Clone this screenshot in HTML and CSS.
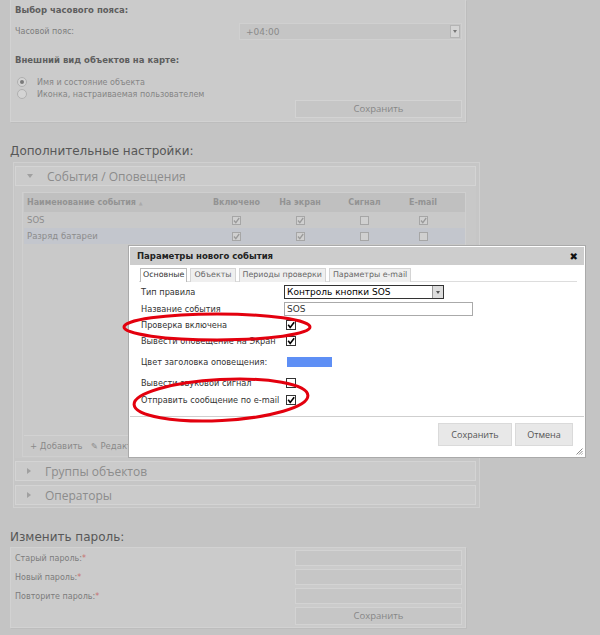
FILE: index.html
```html
<!DOCTYPE html>
<html lang="ru">
<head>
<meta charset="UTF-8">
<meta name="viewport" content="width=device-width, initial-scale=1.0">
<title>Настройки</title>
<link rel="stylesheet" href="styles.css">
</head>
<body>
<div class="page">

    <div class="panel tz-panel">
        <div class="panel-title">Выбор часового пояса:</div>
        <div class="form-row first">
            <span class="label">Часовой пояс:</span>
            <div class="select-box"><span>+04:00</span><span class="select-arrow"></span></div>
        </div>
        <div class="panel-title spaced">Внешний вид объектов на карте:</div>
        <div class="radio-row first"><span class="radio checked"></span>Имя и состояние объекта</div>
        <div class="radio-row"><span class="radio"></span>Иконка, настраиваемая пользователем</div>
        <div class="btn-row"><div class="button">Сохранить</div></div>
    </div>

    <h2 class="section-title">Дополнительные настройки:</h2>

    <div class="accordion">
        <div class="acc-header"><span class="tri open"></span>События / Оповещения</div>
        <div class="acc-content">
            <div class="grid-box">
                <div class="grid-head">
                    <div class="cell name">Наименование события <span class="sort">▲</span></div>
                    <div class="cell">Включено</div>
                    <div class="cell">На экран</div>
                    <div class="cell">Сигнал</div>
                    <div class="cell">E-mail</div>
                    <div class="cell"></div>
                </div>
                <div class="grid-body">
                    <div class="grid-row">
                        <div class="cell name">SOS</div>
                        <div class="cell"><svg class="cb-off" viewBox="0 0 9 9"><rect x="0.5" y="0.5" width="8" height="8"/><path d="M2 4.5 L3.8 6.6 L7.2 2"/></svg></div>
                        <div class="cell"><svg class="cb-off" viewBox="0 0 9 9"><rect x="0.5" y="0.5" width="8" height="8"/><path d="M2 4.5 L3.8 6.6 L7.2 2"/></svg></div>
                        <div class="cell"><svg class="cb-off" viewBox="0 0 9 9"><rect x="0.5" y="0.5" width="8" height="8"/></svg></div>
                        <div class="cell"><svg class="cb-off" viewBox="0 0 9 9"><rect x="0.5" y="0.5" width="8" height="8"/><path d="M2 4.5 L3.8 6.6 L7.2 2"/></svg></div>
                    </div>
                    <div class="grid-row selected">
                        <div class="cell name">Разряд батареи</div>
                        <div class="cell"><svg class="cb-off" viewBox="0 0 9 9"><rect x="0.5" y="0.5" width="8" height="8"/><path d="M2 4.5 L3.8 6.6 L7.2 2"/></svg></div>
                        <div class="cell"><svg class="cb-off" viewBox="0 0 9 9"><rect x="0.5" y="0.5" width="8" height="8"/><path d="M2 4.5 L3.8 6.6 L7.2 2"/></svg></div>
                        <div class="cell"><svg class="cb-off" viewBox="0 0 9 9"><rect x="0.5" y="0.5" width="8" height="8"/></svg></div>
                        <div class="cell"><svg class="cb-off" viewBox="0 0 9 9"><rect x="0.5" y="0.5" width="8" height="8"/></svg></div>
                    </div>
                </div>
                <div class="grid-foot">
                    <span class="tool">+ Добавить</span>
                    <span class="tool">&#x270E; Редактировать</span>
                </div>
            </div>
        </div>
        <div class="acc-header closed"><span class="tri"></span>Группы объектов</div>
        <div class="acc-header closed last"><span class="tri"></span>Операторы</div>
    </div>

    <h2 class="section-title pwd-title">Изменить пароль:</h2>

    <div class="panel pwd-panel">
        <div class="form-row">
            <span class="label">Старый пароль:<span class="req">*</span></span>
            <div class="field"></div>
        </div>
        <div class="form-row">
            <span class="label">Новый пароль:<span class="req">*</span></span>
            <div class="field"></div>
        </div>
        <div class="form-row">
            <span class="label">Повторите пароль:<span class="req">*</span></span>
            <div class="field"></div>
        </div>
        <div class="btn-row"><div class="button">Сохранить</div></div>
    </div>

    <!-- modal dialog over the page -->
    <div class="dialog">
        <div class="dialog-title">
            <span>Параметры нового события</span>
            <span class="dialog-close">&#x2716;</span>
        </div>
        <div class="tabs">
            <span class="tab active">Основные</span>
            <span class="tab">Объекты</span>
            <span class="tab">Периоды проверки</span>
            <span class="tab">Параметры e-mail</span>
        </div>
        <div class="dialog-form">
            <div class="lbl">Тип правила</div>
            <div class="ctl"><div class="d-select"><span>Контроль кнопки SOS</span><span class="d-arrow"></span></div></div>

            <div class="lbl">Название события</div>
            <div class="ctl"><div class="d-input">SOS</div></div>

            <div class="lbl">Проверка включена</div>
            <div class="ctl"><svg class="cb" viewBox="0 0 10 10"><rect x="0.5" y="0.5" width="9" height="9"/><path d="M2.2 4.8 L4.2 7.4 L8.2 2.2"/></svg></div>

            <div class="lbl">Вывести оповещение на Экран</div>
            <div class="ctl"><svg class="cb" viewBox="0 0 10 10"><rect x="0.5" y="0.5" width="9" height="9"/><path d="M2.2 4.8 L4.2 7.4 L8.2 2.2"/></svg></div>

            <div class="lbl">Цвет заголовка оповещения:</div>
            <div class="ctl"><span class="swatch"></span></div>

            <div class="lbl">Вывести звуковой сигнал</div>
            <div class="ctl"><svg class="cb" viewBox="0 0 10 10"><rect x="0.5" y="0.5" width="9" height="9"/></svg></div>

            <div class="lbl">Отправить сообщение по e-mail</div>
            <div class="ctl"><svg class="cb" viewBox="0 0 10 10"><rect x="0.5" y="0.5" width="9" height="9"/><path d="M2.2 4.8 L4.2 7.4 L8.2 2.2"/></svg></div>
        </div>
        <div class="dialog-buttons">
            <div class="d-button save">Сохранить</div>
            <div class="d-button cancel">Отмена</div>
        </div>
        <svg class="grip" viewBox="0 0 8 8"><path d="M7.5 1.5 L1.5 7.5 M7.5 4 L4 7.5 M7.5 6.5 L6.5 7.5"/></svg>
    </div>

    <!-- red annotation marks -->
    <svg class="marks" viewBox="0 0 600 635">
        <ellipse cx="217" cy="327" rx="93" ry="13"/>
        <ellipse cx="221" cy="400" rx="87" ry="20.5" transform="rotate(-3 221 400)"/>
    </svg>
</div>
</body>
</html>
```

FILE: styles.css
```css
/* page */
body {
    margin: 0;
    padding: 0;
    background-color: #c4c4c4;
    font-family: "DejaVu Sans", Verdana, sans-serif;
    font-size: 8px;
    color: #7c7c7c;
}

.page {
    position: relative;
    width: 600px;
    height: 635px;
    overflow: hidden;
}

/* plain panels */
.panel {
    margin-left: 10px;
    width: 456px;
    box-sizing: border-box;
    background-color: #cbcbcb;
    border: 1px solid #d2d2d2;
    box-shadow: 1px 1px 0 #bdbdbd;
}

.tz-panel {
    border-top: none;
    padding: 3px 3px 3px 4px;
}

.panel-title {
    font-weight: bold;
    font-size: 8.5px;
    line-height: 14px;
    color: #5e5e5e;
}

.panel-title.spaced {
    margin-top: 13px;
}

.form-row {
    display: flex;
    justify-content: space-between;
    align-items: center;
    height: 16px;
    margin-bottom: 3px;
}

.form-row.first {
    margin-top: 6px;
    margin-bottom: 0;
    height: 17px;
}

.select-box {
    width: 223px;
    height: 17px;
    box-sizing: border-box;
    background-color: #c5c5c5;
    border: 1px solid #d0d0d0;
    display: flex;
    justify-content: space-between;
    align-items: center;
    padding-left: 6px;
    font-size: 9px;
    color: #8a8a8a;
}

.select-arrow {
    width: 10px;
    height: 13px;
    margin-right: 1px;
    box-sizing: border-box;
    border: 1px solid #b4b4b4;
    background-color: #d4d4d4;
    position: relative;
}

.select-arrow::after {
    content: "";
    position: absolute;
    left: 2px;
    top: 4px;
    border-left: 2px solid transparent;
    border-right: 2px solid transparent;
    border-top: 3px solid #777;
}

.radio-row {
    display: flex;
    align-items: center;
    height: 12px;
    padding-left: 2px;
    color: #858585;
}

.radio-row.first {
    margin-top: 9px;
}

.radio {
    width: 8px;
    height: 8px;
    border-radius: 50%;
    border: 1px solid #b0b0b0;
    background-color: #d4d4d4;
    margin-right: 10px;
    position: relative;
}

.radio.checked::after {
    content: "";
    position: absolute;
    left: 2px;
    top: 2px;
    width: 4px;
    height: 4px;
    border-radius: 50%;
    background-color: #7a7a7a;
}

.btn-row {
    display: flex;
    justify-content: flex-end;
}

.button {
    width: 167px;
    height: 18px;
    box-sizing: border-box;
    background-color: #c6c6c6;
    border: 1px solid #d3d3d3;
    text-align: center;
    line-height: 16px;
    font-family: "Open Sans", sans-serif;
    font-size: 9.5px;
    color: #878787;
}

.section-title {
    margin: 21px 0 3px 10px;
    font-size: 12px;
    line-height: 16px;
    font-weight: normal;
    color: #575757;
}

/* accordion */
.accordion {
    margin-left: 13px;
    width: 467px;
    box-sizing: border-box;
    background-color: #c6c6c6;
    border: 1px solid #d0d0d0;
    padding: 3px 3px 2px 1px;
}

.acc-header {
    height: 20px;
    box-sizing: border-box;
    background-color: #cbcbcb;
    border: 1px solid #d4d4d4;
    display: flex;
    align-items: center;
    font-family: "Open Sans", sans-serif;
    font-size: 12px;
    color: #8c8c8c;
}

.acc-header.closed {
    margin-top: 3px;
}

.acc-header.last {
    margin-top: 4px;
}

.tri {
    width: 0;
    height: 0;
    margin-left: 11px;
    margin-right: 14px;
    border-top: 3px solid transparent;
    border-bottom: 3px solid transparent;
    border-left: 4px solid #a0a0a0;
}

.tri.open {
    border-left: 3px solid transparent;
    border-right: 3px solid transparent;
    border-top: 4px solid #a0a0a0;
    border-bottom: none;
    margin-right: 14px;
}

.acc-content {
    padding: 6px 10px 1px 7px;
    background-color: #c8c8c8;
}

.grid-box {
    border: 1px solid #cfcfcf;
    padding-left: 1px;
    background-color: #c9c9c9;
}

.grid-head {
    display: grid;
    grid-template-columns: 181px 63px 64px 65px 52px 15px;
    height: 19px;
    align-items: center;
    background-color: #c0c0c0;
    font-weight: bold;
    font-size: 8px;
    color: #939393;
}

.cell {
    text-align: center;
}

.cell.name {
    text-align: left;
    padding-left: 3px;
}

.sort {
    font-size: 5px;
    color: #aaa;
    vertical-align: middle;
}

.grid-body {
    height: 223px;
}

.grid-row {
    display: grid;
    grid-template-columns: 181px 63px 64px 65px 52px;
    height: 16px;
    align-items: center;
    font-size: 8.5px;
    color: #8c8c8c;
}

.grid-row.selected {
    background-color: #c3c6cd;
}

.cb-off {
    width: 9px;
    height: 9px;
    display: block;
    margin: 0 auto;
}

.cb-off rect {
    fill: #d0d0d0;
    stroke: #a6a6a6;
}

.cb-off path {
    fill: none;
    stroke: #9a9a9a;
    stroke-width: 1.3;
}

.grid-foot {
    height: 21px;
    border-top: 1px solid #d2d2d2;
    box-sizing: border-box;
    display: flex;
    align-items: center;
    padding-left: 6px;
    gap: 8px;
    font-size: 8.5px;
    color: #8a8a8a;
}

.pwd-title {
    margin-top: 21px;
    margin-bottom: 2px;
}

.pwd-panel {
    padding: 2px 3px 2px 4px;
}

.field {
    width: 167px;
    height: 16px;
    box-sizing: border-box;
    background-color: #c6c6c6;
    border: 1px solid #d3d3d3;
}

.req {
    color: #c77070;
}

/* dialog */
.dialog {
    position: absolute;
    left: 128px;
    top: 245px;
    width: 458px;
    height: 213px;
    box-sizing: border-box;
    background-color: #fff;
    border: 1px solid #aaa;
    padding: 1px;
    color: #333;
}

.dialog-title {
    height: 18px;
    background-color: #cdcdcd;
    display: flex;
    justify-content: space-between;
    align-items: center;
    padding: 0 6px 0 7px;
    font-weight: bold;
    font-size: 8.5px;
    color: #222;
}

.dialog-close {
    font-size: 10px;
    color: #111;
}

.tabs {
    display: flex;
    gap: 3px;
    margin: 3px 7px 0 9px;
    padding-left: 1px;
    height: 14px;
    box-sizing: border-box;
    border-bottom: 1px solid #ddd;
}

.tab {
    height: 14px;
    box-sizing: border-box;
    padding: 0 3px;
    line-height: 12px;
    border: 1px solid #d4d4d4;
    border-bottom: none;
    background-color: #efefef;
    font-size: 7.9px;
    color: #666;
}

.tab.active {
    padding: 0 2px;
    background-color: #fff;
    border-color: #bbb;
    color: #333;
}

.dialog-form {
    display: grid;
    grid-template-columns: 143px 1fr;
    grid-template-rows: 16px 17px 16px 16px 26px 16px 18px;
    align-items: center;
    margin-top: 2px;
    padding-left: 11px;
    font-size: 8.2px;
}

.lbl {
    white-space: nowrap;
}

.ctl {
    display: flex;
    align-items: center;
}

.d-select {
    width: 160px;
    height: 14px;
    box-sizing: border-box;
    border: 1px solid #333;
    display: flex;
    justify-content: space-between;
    align-items: center;
    padding-left: 2px;
    font-size: 9px;
    color: #000;
}

.d-arrow {
    width: 11px;
    height: 12px;
    box-sizing: border-box;
    border-left: 1px solid #999;
    background-color: #ddd;
    position: relative;
}

.d-arrow::after {
    content: "";
    position: absolute;
    left: 3px;
    top: 5px;
    border-left: 2px solid transparent;
    border-right: 2px solid transparent;
    border-top: 3px solid #555;
}

.d-input {
    width: 189px;
    height: 14px;
    box-sizing: border-box;
    border: 1px solid #aaa;
    padding-left: 2px;
    line-height: 12px;
    font-size: 9px;
    color: #333;
}

.cb {
    width: 10px;
    height: 10px;
    margin-left: 2px;
}

.cb rect {
    fill: #fff;
    stroke: #333;
}

.cb path {
    fill: none;
    stroke: #000;
    stroke-width: 1.6;
}

.swatch {
    width: 45px;
    height: 10px;
    margin-left: 3px;
    background-color: #5e8ff5;
}

.dialog-buttons {
    margin-top: 7px;
    border-top: 1px solid #cfcfcf;
    display: flex;
    justify-content: flex-end;
    gap: 3px;
    padding: 6px 11px 0 0;
}

.d-button {
    height: 23px;
    box-sizing: border-box;
    background-color: #e8e8e8;
    border: 1px solid #dadada;
    text-align: center;
    line-height: 21px;
    font-family: "Open Sans", sans-serif;
    font-size: 9px;
    color: #555;
}

.d-button.save {
    width: 74px;
}

.d-button.cancel {
    width: 58px;
}

.grip {
    position: absolute;
    right: 2px;
    bottom: 2px;
    width: 8px;
    height: 8px;
}

.grip path {
    stroke: #888;
    stroke-width: 1;
    fill: none;
}

/* annotation */
.marks {
    position: absolute;
    left: 0;
    top: 0;
    width: 600px;
    height: 635px;
    pointer-events: none;
}

.marks ellipse {
    fill: none;
    stroke: #e3000e;
    stroke-width: 3;
}
```
